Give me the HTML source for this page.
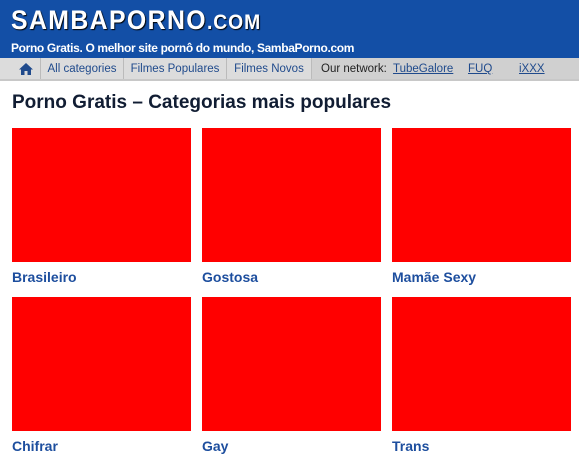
<!DOCTYPE html>
<html><head><meta charset="utf-8"><style>
*{margin:0;padding:0;box-sizing:border-box}
body{width:579px;height:460px;overflow:hidden;background:#fff;font-family:"Liberation Sans",sans-serif}
.hd{position:absolute;left:0;top:0;width:579px;height:58px;background:#134fa6;color:#fff}
.logo{position:absolute;left:11px;top:5px;font-size:27px;font-weight:bold;letter-spacing:1.5px;text-shadow:1px 1px 1px #000;transform:scaleX(0.92);transform-origin:0 0;white-space:nowrap}
.logo small{font-size:21px;letter-spacing:1px}
.tag{position:absolute;left:11px;top:41px;font-size:12px;font-weight:bold;letter-spacing:-0.35px;white-space:nowrap}
.nav{position:absolute;left:0;top:58px;width:579px;height:23px;background:#dcdcdc;border-bottom:2px solid #c8c8c8;font-size:11.5px;color:#1f4a8c}
.nav div{position:absolute;top:0;height:21px;line-height:22px;border-left:1px solid #bbb;text-align:center;white-space:nowrap}
.nav .net{background:#d0d0d0;color:#222;text-align:left;padding-left:9px}
.nav .net a{color:#1f4a8c;text-decoration:underline}
h1{position:absolute;left:12px;top:92px;font-size:19px;color:#111d33}
.b{position:absolute;width:179px;height:134px;background:#ff0000}
.l{position:absolute;font-size:14px;font-weight:bold;color:#1d4e9e}
</style></head><body>
<div class="hd"><div class="logo">SAMBAPORNO<small>.COM</small></div><div class="tag">Porno Gratis. O melhor site pornô do mundo, SambaPorno.com</div></div>
<div class="nav">
<div style="left:12px;width:28px;border-left:none"><svg width="14" height="12" viewBox="0 0 14 12" style="margin-top:5px"><path d="M7 0L0 6.5h2V12h3.5V8h3v4H12V6.5h2z" fill="#1f4a8c"/></svg></div>
<div style="left:40px;width:83px">All categories</div>
<div style="left:123px;width:103px">Filmes Populares</div>
<div style="left:226px;width:85px">Filmes Novos</div>
<div class="net" style="left:311px;width:268px">Our network:<a style="position:absolute;left:81px">TubeGalore</a><a style="position:absolute;left:156px">FUQ</a><a style="position:absolute;left:207px">iXXX</a></div>
</div>
<h1>Porno Gratis – Categorias mais populares</h1>
<div class="b" style="left:12px;top:128px"></div><div class="b" style="left:202px;top:128px"></div><div class="b" style="left:392px;top:128px"></div>
<div class="l" style="left:12px;top:269px">Brasileiro</div><div class="l" style="left:202px;top:269px">Gostosa</div><div class="l" style="left:392px;top:269px">Mamãe Sexy</div>
<div class="b" style="left:12px;top:297px"></div><div class="b" style="left:202px;top:297px"></div><div class="b" style="left:392px;top:297px"></div>
<div class="l" style="left:12px;top:438px">Chifrar</div><div class="l" style="left:202px;top:438px">Gay</div><div class="l" style="left:392px;top:438px">Trans</div>
</body></html>
